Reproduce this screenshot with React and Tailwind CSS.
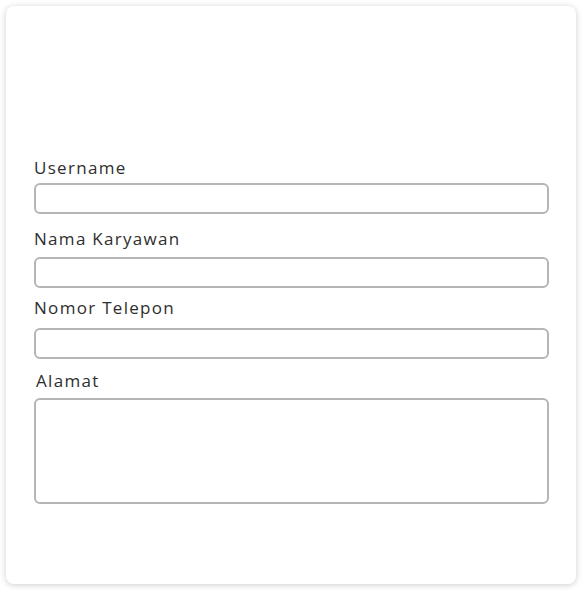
import React from 'react';

const labelCls = "block text-[17px] leading-[20px] tracking-[1.3px] text-[#2e2e2e]";
const inputCls = "block w-full rounded-md border-2 border-[#b5b5b5] bg-white";

export default function App() {
  return (
    <div className="w-[582px] h-[590px] bg-white p-[6px] font-['Open_Sans','Liberation_Sans',sans-serif]">
      <div className="h-[578px] rounded-lg bg-white shadow-[0_1px_6px_rgba(0,0,0,0.2)] pl-[28px] pr-[27px] pt-[152px]">
        <label htmlFor="username" className={`${labelCls} mb-[5px]`}>Username</label>
        <input id="username" type="text" className={`${inputCls} h-[31px]`} />

        <label htmlFor="nama" className={`${labelCls} mt-[15px] mb-[8px]`}>Nama Karyawan</label>
        <input id="nama" type="text" className={`${inputCls} h-[31px]`} />

        <label htmlFor="telepon" className={`${labelCls} mt-[10px] mb-[10px]`}>Nomor Telepon</label>
        <input id="telepon" type="text" className={`${inputCls} h-[31px]`} />

        <label htmlFor="alamat" className={`${labelCls} ml-[2px] mt-[12px] mb-[7px]`}>Alamat</label>
        <textarea id="alamat" className={`${inputCls} h-[106px] resize-none`} />
      </div>
    </div>
  );
}
